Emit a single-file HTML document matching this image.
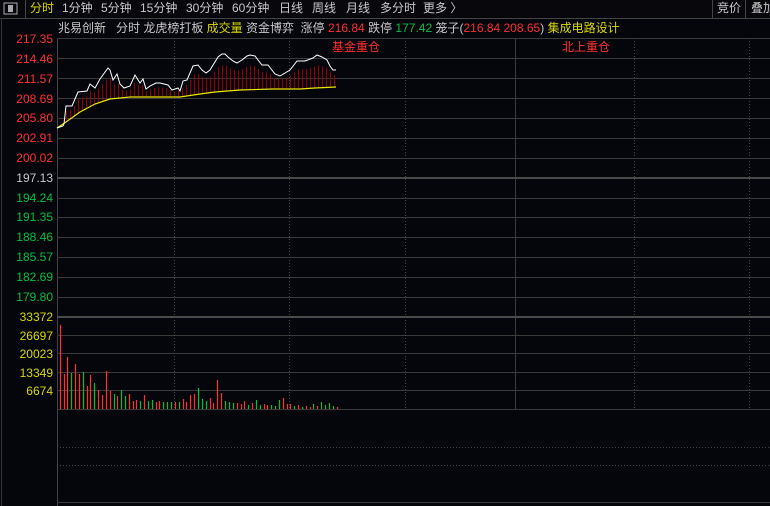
<!DOCTYPE html><html><head><meta charset="utf-8"><style>
body{margin:0;width:770px;height:506px;background:#05050c;overflow:hidden;font-family:"Liberation Sans","Noto Sans CJK SC",sans-serif;position:relative}
.t{position:absolute;font-size:12px;white-space:nowrap;line-height:14px}
.g{color:#c8c8c8}.y{color:#d8d800}.r{color:#ff3030}.gr{color:#00c040}
.ax{position:absolute;right:717px;font-size:12px;line-height:14px;text-align:right}
</style></head><body>
<svg width="770" height="506" style="position:absolute;left:0;top:0">
<rect x="0" y="0" width="770" height="18" fill="#08080c"/>
<rect x="4" y="3" width="13" height="11" fill="none" stroke="#aaa"/><rect x="8" y="5" width="5" height="7" fill="#aaa"/>
<line x1="25.5" y1="0" x2="25.5" y2="18" stroke="#444"/>
<line x1="712.5" y1="0" x2="712.5" y2="18" stroke="#444"/>
<line x1="745.5" y1="0" x2="745.5" y2="18" stroke="#444"/>
<line x1="0" y1="18.5" x2="770" y2="18.5" stroke="#444"/>
<line x1="1.5" y1="18" x2="1.5" y2="506" stroke="#333"/>
<line x1="57.5" y1="38" x2="57.5" y2="506" stroke="#444"/>
<g stroke="#3a3a3a">
<line x1="57" y1="38.5" x2="770" y2="38.5"/><line x1="57" y1="58.5" x2="770" y2="58.5"/><line x1="57" y1="78.5" x2="770" y2="78.5"/><line x1="57" y1="98.5" x2="770" y2="98.5"/><line x1="57" y1="118.5" x2="770" y2="118.5"/><line x1="57" y1="138.5" x2="770" y2="138.5"/><line x1="57" y1="158.5" x2="770" y2="158.5"/>
<line x1="57" y1="198.5" x2="770" y2="198.5"/><line x1="57" y1="217.5" x2="770" y2="217.5"/><line x1="57" y1="237.5" x2="770" y2="237.5"/><line x1="57" y1="257.5" x2="770" y2="257.5"/><line x1="57" y1="277.5" x2="770" y2="277.5"/><line x1="57" y1="297.5" x2="770" y2="297.5"/>
<line x1="57" y1="335.5" x2="770" y2="335.5"/><line x1="57" y1="353.5" x2="770" y2="353.5"/><line x1="57" y1="372.5" x2="770" y2="372.5"/><line x1="57" y1="390.5" x2="770" y2="390.5"/><line x1="57" y1="409.5" x2="770" y2="409.5"/><line x1="57" y1="502.5" x2="770" y2="502.5"/>
<line x1="515.5" y1="38" x2="515.5" y2="409"/>
</g>
<g stroke="#4a4a4a" stroke-width="2"><line x1="57" y1="178" x2="770" y2="178"/><line x1="57" y1="317" x2="770" y2="317"/></g>
<g stroke="#444" stroke-dasharray="1,2">
<line x1="174.5" y1="38" x2="174.5" y2="409"/><line x1="289.5" y1="38" x2="289.5" y2="409"/><line x1="405.5" y1="38" x2="405.5" y2="409"/><line x1="634.5" y1="38" x2="634.5" y2="409"/><line x1="749.5" y1="38" x2="749.5" y2="409"/>
<line x1="57" y1="447.5" x2="770" y2="447.5"/><line x1="57" y1="465.5" x2="770" y2="465.5"/>
</g>
<g id="bars" stroke="#900000" stroke-width="1"></g>
<polyline id="avg" fill="none" stroke="#e8e800" stroke-width="1.2" points="57,128 66,122 80,112 95,104 110,99 130,97 150,97 180,97 200,94 215,92 240,90 273,89 300,89 315,88 336,87"/>
<polyline id="pr" fill="none" stroke="#fff" stroke-width="1" points="57,128 63,126 64,124 66,106 72,106 78,92 87,91 90,84 95,88 100,79 108,68 110,70 113,80 117,74 120,84 124,88 130,86 135,75 140,83 143,79 146,89 150,86 156,83 160,83 168,85 172,90 178,88 180,91 183,81 187,80 193,66 198,65 202,70 206,73 210,70 218,57 222,54 225,54 228,57 233,61 237,63 242,60 247,56 250,55 255,56 258,60 262,65 268,65 275,74 280,76 290,70 297,61 305,61 313,58 317,55 322,57 327,60 330,66 333,70 336,70"/>
<g id="vol" stroke-width="1.2"></g>
</svg>
<div class="t y" style="left:30px;top:1px">分时</div>
<div class="t g" style="left:62px;top:1px">1分钟</div>
<div class="t g" style="left:101px;top:1px">5分钟</div>
<div class="t g" style="left:140px;top:1px">15分钟</div>
<div class="t g" style="left:186px;top:1px">30分钟</div>
<div class="t g" style="left:232px;top:1px">60分钟</div>
<div class="t g" style="left:279px;top:1px">日线</div>
<div class="t g" style="left:312px;top:1px">周线</div>
<div class="t g" style="left:346px;top:1px">月线</div>
<div class="t g" style="left:380px;top:1px">多分时</div>
<div class="t g" style="left:423px;top:1px">更多 〉</div>
<div class="t g" style="left:717px;top:1px">竞价</div>
<div class="t g" style="left:751px;top:1px">叠加</div>
<div class="t" style="left:58px;top:21px"><span class="g">兆易创新&nbsp;&nbsp; 分时 龙虎榜打板 </span><span class="y">成交量 </span><span class="g">资金博弈&nbsp; 涨停 </span><span class="r">216.84 </span><span class="g">跌停 </span><span class="gr">177.42 </span><span class="g">笼子(</span><span class="r">216.84 208.65</span><span class="g">) </span><span class="y">集成电路设计</span></div>
<div class="t r" style="left:332px;top:40px">基金重仓</div>
<div class="t r" style="left:562px;top:40px">北上重仓</div>
<div class="ax r" style="top:32px">217.35</div><div class="ax r" style="top:52px">214.46</div><div class="ax r" style="top:72px">211.57</div><div class="ax r" style="top:92px">208.69</div><div class="ax r" style="top:111px">205.80</div><div class="ax r" style="top:131px">202.91</div><div class="ax r" style="top:151px">200.02</div>
<div class="ax g" style="top:171px">197.13</div>
<div class="ax gr" style="top:191px">194.24</div><div class="ax gr" style="top:210px">191.35</div><div class="ax gr" style="top:230px">188.46</div><div class="ax gr" style="top:250px">185.57</div><div class="ax gr" style="top:270px">182.69</div><div class="ax gr" style="top:290px">179.80</div>
<div class="ax y" style="top:310px">33372</div><div class="ax y" style="top:329px">26697</div><div class="ax y" style="top:347px">20023</div><div class="ax y" style="top:366px">13349</div><div class="ax y" style="top:384px">6674</div>
<script>
function pts(id){return document.getElementById(id).getAttribute('points').split(' ').map(s=>s.split(',').map(Number));}
function at(p,x){for(let i=1;i<p.length;i++){if(x<=p[i][0]){const a=p[i-1],b=p[i];return a[1]+(b[1]-a[1])*(x-a[0])/((b[0]-a[0])||1);}}return p[p.length-1][1];}
const A=pts('avg'),P=pts('pr');let s='';
for(let x=62;x<=334;x+=4){const a=at(A,x),p=at(P,x);const t=a+0.7*(p-a);if(Math.abs(a-t)>1)s+=`<line x1="${x+.5}" x2="${x+.5}" y1="${a}" y2="${t}"/>`;}
document.getElementById('bars').innerHTML=s;
const v="60r325 64r374 67r357 71g373 75r364 79r374 83g372 87r386 90r375 94g383 98r390 102r395 106r371 110r391 114g394 117r396 121g390 125g396 129r394 133r401 136r400 140g401 144r395 148g401 152g400 156r402 159r401 163g402 167g402 171g402 175r402 179g402 183r399 186r402 190r395 194r394 198g388 202g399 206g401 210r398 213r403 217r380 221r393 225g401 229g402 233g403 237r403 241r404 244r401 248g405 252r403 256g400 260g405 264r404 267r405 271g405 275g406 279g400 283r398 287r404 290r404 294g406 298r405 302g407 306r406 310r407 313g404 317r406 321g402 325g405 329g403 333g406 337r407";
let h='';v.split(' ').forEach(e=>{const m=e.match(/(\d+)([rg])(\d+)/);h+=`<line x1="${+m[1]+.5}" x2="${+m[1]+.5}" y1="${m[3]}" y2="409" stroke="${m[2]=='r'?'#ff3030':'#00c040'}"/>`;});
document.getElementById('vol').innerHTML=h;
</script>
</body></html>
